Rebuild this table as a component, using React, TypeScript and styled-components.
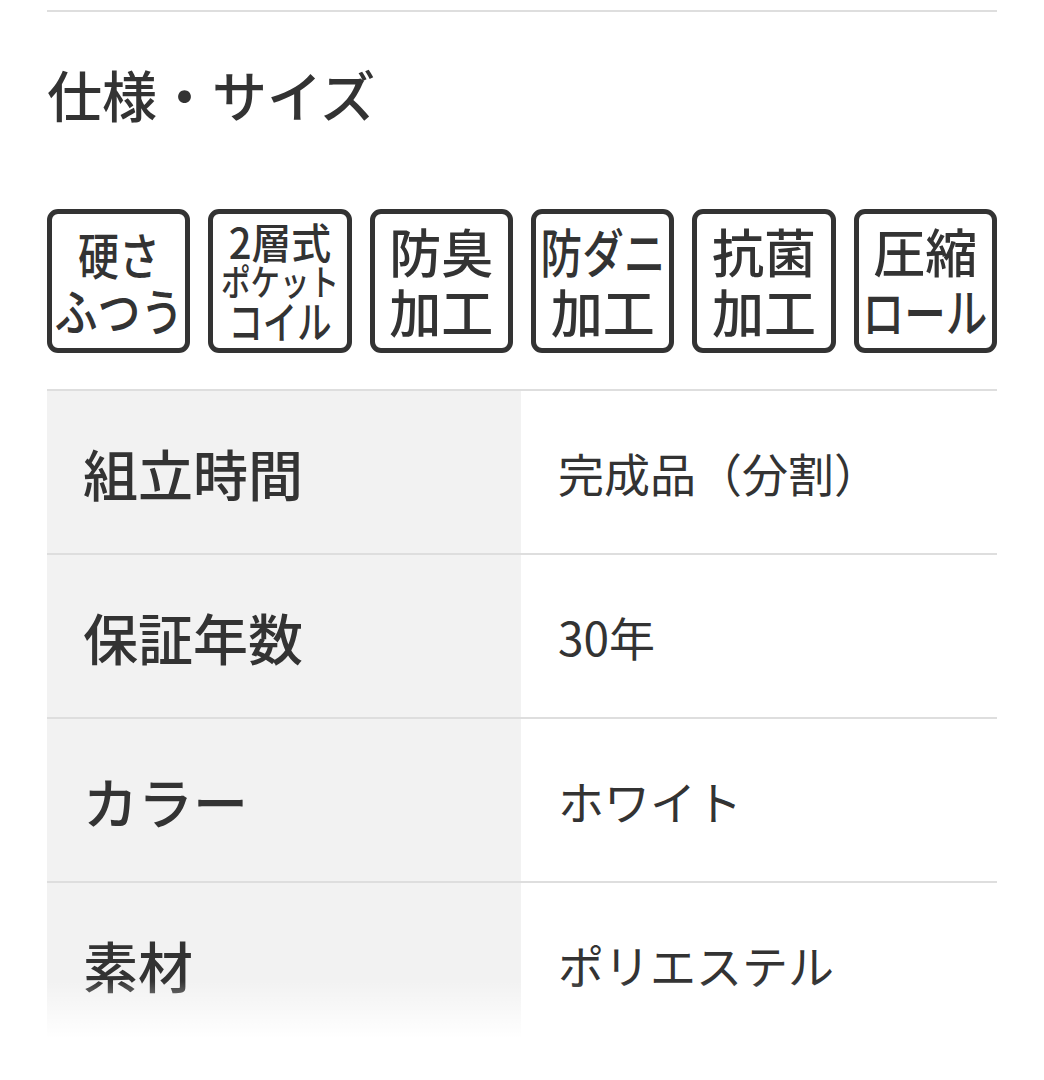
import React from "react";
import styled, { createGlobalStyle } from "styled-components";

const Global = createGlobalStyle`
  html, body { margin: 0; padding: 0; background: #fff; }
  body { font-family: "Noto Sans CJK JP", "Noto Sans", sans-serif; color: #333; }
`;

const Page = styled.div`
  width: 950px;
  padding: 10px 47px 0;
`;

const TopRule = styled.div`
  height: 2px;
  background: #dedede;
`;

const Heading = styled.h2`
  margin: 48px 0 0;
  font-size: 55px;
  line-height: 66px;
  font-weight: 500;
  letter-spacing: 0;
  color: #333;
`;

const Badges = styled.div`
  display: grid;
  grid-template-columns: repeat(6, 1fr);
  gap: 18px;
  margin-top: 83px;
`;

const Badge = styled.div`
  height: 144px;
  box-sizing: border-box;
  border: 5px solid #333;
  border-radius: 11px;
  display: flex;
  flex-direction: column;
  align-items: center;
  justify-content: center;
  overflow: hidden;
`;

const BadgeLine = styled.span<{ $size: number; $lh: number; $sx?: number }>`
  display: block;
  font-size: ${(p) => p.$size}px;
  line-height: ${(p) => p.$lh}px;
  font-weight: 500;
  color: #333;
  white-space: nowrap;
  transform: scaleX(${(p) => p.$sx ?? 1});
`;

const Table = styled.div`
  position: relative;
  margin-top: 36px;
  border-top: 2px solid #dedede;
  &::after {
    content: "";
    position: absolute;
    left: 0;
    right: 0;
    bottom: 0;
    height: 64px;
    background: linear-gradient(to bottom, rgba(255,255,255,0), #fff 90%);
  }
`;

const Row = styled.div`
  display: grid;
  grid-template-columns: 474px 1fr;
  height: 162px;
  & + & { border-top: 2px solid #dedede; }
`;

const Label = styled.div`
  background: #f2f2f2;
  display: flex;
  align-items: center;
  padding-left: 36px;
  font-size: 55px;
  font-weight: 500;
  color: #333;
`;

const Value = styled.div`
  display: flex;
  align-items: center;
  padding-left: 37px;
  font-size: 46px;
  font-weight: 400;
  color: #333;
`;

type L = { t: string; size: number; lh: number; sx?: number };

const badges: L[][] = [
  [
    { t: "硬さ", size: 50, lh: 56, sx: 0.82 },
    { t: "ふつう", size: 50, lh: 56, sx: 0.86 },
  ],
  [
    { t: "2層式", size: 42, lh: 42, sx: 0.95 },
    { t: "ポケット", size: 36, lh: 36, sx: 0.82 },
    { t: "コイル", size: 44, lh: 44, sx: 0.78 },
  ],
  [
    { t: "防臭", size: 52, lh: 60 },
    { t: "加工", size: 52, lh: 60 },
  ],
  [
    { t: "防ダニ", size: 52, lh: 60, sx: 0.8 },
    { t: "加工", size: 52, lh: 60 },
  ],
  [
    { t: "抗菌", size: 52, lh: 60 },
    { t: "加工", size: 52, lh: 60 },
  ],
  [
    { t: "圧縮", size: 52, lh: 60 },
    { t: "ロール", size: 52, lh: 60, sx: 0.8 },
  ],
];

const rows: [string, string][] = [
  ["組立時間", "完成品（分割）"],
  ["保証年数", "30年"],
  ["カラー", "ホワイト"],
  ["素材", "ポリエステル"],
];

export default function App() {
  return (
    <>
      <Global />
      <Page>
        <TopRule />
        <Heading>仕様・サイズ</Heading>
        <Badges>
          {badges.map((lines, i) => (
            <Badge key={i}>
              {lines.map((l, j) => (
                <BadgeLine key={j} $size={l.size} $lh={l.lh} $sx={l.sx}>
                  {l.t}
                </BadgeLine>
              ))}
            </Badge>
          ))}
        </Badges>
        <Table>
          {rows.map(([k, v]) => (
            <Row key={k}>
              <Label>{k}</Label>
              <Value>{v}</Value>
            </Row>
          ))}
        </Table>
      </Page>
    </>
  );
}
